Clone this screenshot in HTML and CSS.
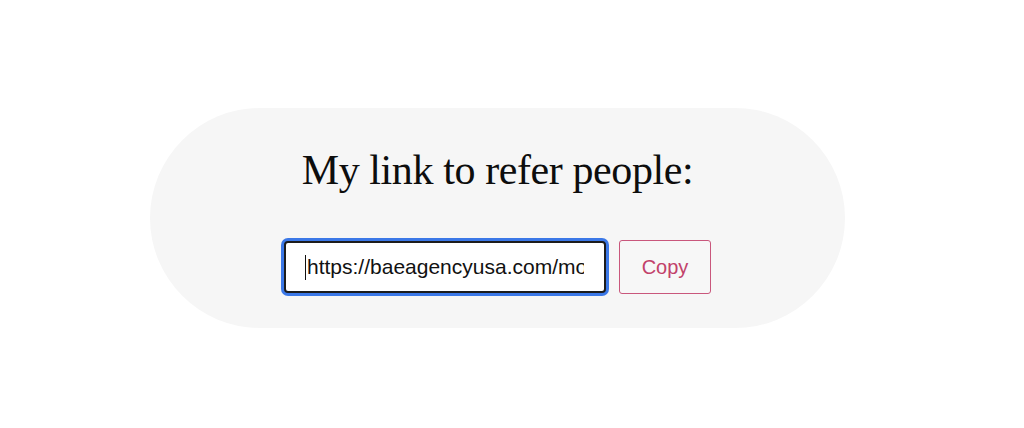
FILE: index.html
```html
<!DOCTYPE html>
<html lang="en">
<head>
  <meta charset="UTF-8" />
  <meta name="viewport" content="width=device-width, initial-scale=1.0"/>
  <title>Refer people</title>
  <link rel="stylesheet" href="styles.css">
</head>
<body>
  <div class="refer-box">
    <h2 class="refer-title">My link to refer people:</h2>
    <div class="refer-row">
      <div class="link-field">
        <span class="caret"></span><span class="link-text">https://baeagencyusa.com/mo</span>
      </div>
      <button class="copy-btn">Copy</button>
    </div>
  </div>
</body>
</html>
```

FILE: styles.css
```css
body {
  margin: 0;
  background-color: #ffffff;
  font-family: "Liberation Sans", Arial, sans-serif;
}
.refer-box {
  box-sizing: border-box;
  width: 695px;
  height: 220px;
  margin: 108px 0 0 150px;
  padding-top: 36px;
  background-color: #f6f6f6;
  border-radius: 110px;
  text-align: center;
}
.refer-title {
  margin: 0;
  font-family: "Liberation Serif", "Times New Roman", serif;
  font-weight: normal;
  font-size: 42px;
  line-height: 52px;
  color: #0d0d0d;
  letter-spacing: -0.4px;
}
.refer-row {
  display: flex;
  justify-content: center;
  align-items: center;
  gap: 13px;
  margin-top: 44px;
}
.link-field {
  box-sizing: border-box;
  display: flex;
  align-items: center;
  width: 322px;
  height: 52px;
  padding: 0 20px 0 19px;
  background-color: #ffffff;
  border: 2px solid #1c1c1c;
  border-radius: 4px;
  box-shadow: 0 0 0 3px #3b78e7;
  overflow: hidden;
  white-space: nowrap;
  font-size: 21px;
  color: #111111;
}
.caret {
  flex: none;
  width: 1px;
  height: 25px;
  margin-right: 1px;
  background-color: #111111;
}
.link-text {
  min-width: 0;
  overflow: hidden;
  text-overflow: clip;
}
.copy-btn {
  box-sizing: border-box;
  width: 92px;
  height: 54px;
  background-color: #f7f7f7;
  border: 1.5px solid #c9577c;
  border-radius: 3px;
  color: #c2416a;
  font-family: "Liberation Sans", Arial, sans-serif;
  font-size: 20px;
  cursor: pointer;
}
```
